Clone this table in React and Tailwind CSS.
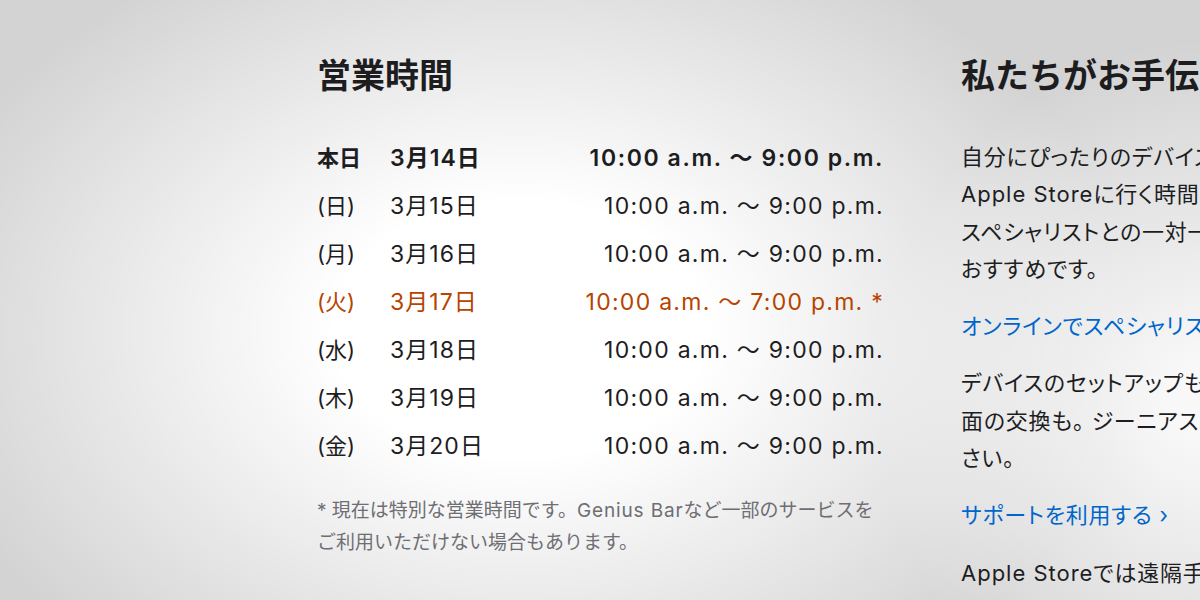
import React from 'react';

const hours = [
  { label: '本日', date: '3月14日', time: '10:00 a.m. 〜 9:00 p.m.', today: true },
  { label: '(日)', date: '3月15日', time: '10:00 a.m. 〜 9:00 p.m.' },
  { label: '(月)', date: '3月16日', time: '10:00 a.m. 〜 9:00 p.m.' },
  { label: '(火)', date: '3月17日', time: '10:00 a.m. 〜 7:00 p.m. *', special: true },
  { label: '(水)', date: '3月18日', time: '10:00 a.m. 〜 9:00 p.m.' },
  { label: '(木)', date: '3月19日', time: '10:00 a.m. 〜 9:00 p.m.' },
  { label: '(金)', date: '3月20日', time: '10:00 a.m. 〜 9:00 p.m.' },
];

const HourRow = ({ label, date, time, today, special }) => {
  const color = special ? 'text-[#b64400]' : 'text-[#1d1d1f]';
  const weight = today ? 'font-semibold' : 'font-normal';
  return (
    <div className={`flex items-center leading-[34px] text-[23px] ${color} ${weight}`}>
      <span className="w-[73px] shrink-0 text-[22px]">{label}</span>
      <span className="flex-1 tracking-[0.045em]">{date}</span>
      <span className={`text-right whitespace-nowrap ${today ? 'tracking-[0.07em]' : 'tracking-[0.055em]'}`}>{time}</span>
    </div>
  );
};

// latin runs in the body copy are set a little looser than the kana
const Latin = ({ children }) => <span className="tracking-[0.045em]">{children}</span>;

const App = () => {
  return (
    <div className="w-[1200px] h-[600px] overflow-hidden bg-[#d3d3d3] bg-[radial-gradient(ellipse_620px_430px_at_520px_330px,#ffffff_30%,rgba(255,255,255,0)_100%),radial-gradient(ellipse_320px_360px_at_1200px_400px,rgba(250,250,250,0.95)_10%,rgba(250,250,250,0)_100%)] font-['Inter','Noto_Sans_CJK_JP',sans-serif] text-[#1d1d1f]">
      <div className="flex gap-[77px] pl-[317px] pt-[56px]">
        {/* store hours */}
        <section className="w-[567px] shrink-0">
          <h2 className="text-[34px] leading-[40px] font-bold">営業時間</h2>
          <div className="mt-[45px] flex flex-col gap-[14px]">
            {hours.map(h => <HourRow key={h.date} {...h} />)}
          </div>
          <p className="mt-[32px] text-[19px] leading-[32px] text-[#6e6e73]">
            * 現在は特別な営業時間です。<Latin>Genius Bar</Latin>など一部のサービスを<br />
            ご利用いただけない場合もあります。
          </p>
        </section>

        {/* help column, runs past the window edge */}
        <section className="w-[420px] shrink-0 whitespace-nowrap">
          <h2 className="text-[34px] leading-[40px] font-bold">私たちがお手伝いします</h2>
          <div className="text-[22px] leading-[37.3px] tracking-[0.035em] [font-feature-settings:'palt']">
            <p className="mt-[43px]">
              自分にぴったりのデバイスを見つけたいけれど、<br />
              <Latin>Apple Store</Latin>に行く時間がない。そんな時は、<br />
              スペシャリストとの一対一のセッションが<br />
              おすすめです。
            </p>
            <a className="block mt-[20px] text-[#0066cc]">オンラインでスペシャリストに相談する ›</a>
            <p className="mt-[20px]">
              デバイスのセットアップも、ひび割れた画<br />
              面の交換も。 ジーニアスにお任せくだ<br />
              さい。
            </p>
            <a className="block mt-[20px] text-[#0066cc]">サポートを利用する ›</a>
            <p className="mt-[20px]">
              <Latin>Apple Store</Latin>では遠隔手話通訳サービスも
            </p>
          </div>
        </section>
      </div>
    </div>
  );
};

export default App;
